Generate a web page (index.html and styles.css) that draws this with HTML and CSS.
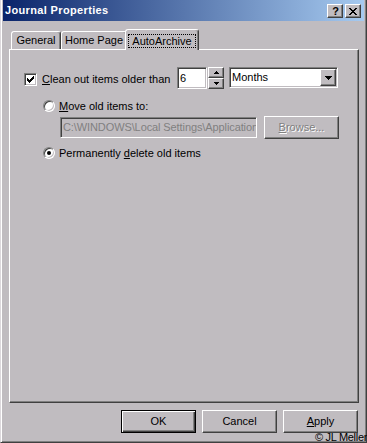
FILE: index.html
```html
<!DOCTYPE html>
<html>
<head>
<meta charset="utf-8">
<link rel="stylesheet" href="styles.css">
</head>
<body>
<div class="window">
  <div class="titlebar">
    <span class="title">Journal Properties</span>
    <div class="tbtns">
      <span class="tbtn help">?</span>
      <span class="tbtn close">
        <svg width="8" height="7" viewBox="0 0 8 7" shape-rendering="crispEdges"><path d="M0 0h2v1H0zM6 0h2v1H6zM1 1h2v1H1zM5 1h2v1H5zM2 2h4v1H2zM3 3h2v1H3zM2 4h4v1H2zM1 5h2v1H1zM5 5h2v1H5zM0 6h2v1H0zM6 6h2v1H6z" fill="#000"/></svg>
      </span>
    </div>
  </div>
  <div class="body">
    <div class="tabs">
      <div class="tab t-general">General</div>
      <div class="tab t-home">Home Page</div>
      <div class="tab active"><span class="focus">AutoArchive</span></div>
    </div>
    <div class="panel">
      <div class="row r1">
        <span class="check sunk">
          <svg width="9" height="9" viewBox="0 0 9 9" shape-rendering="crispEdges"><path d="M1 3h1v3H1zM2 4h1v3H2zM3 5h1v3H3zM4 4h1v3H4zM5 3h1v3H5zM6 2h1v3H6zM7 1h1v3H7z" fill="#000"/></svg>
        </span>
        <span class="lbl l1"><u>C</u>lean out items older than</span>
        <span class="edit sunk">6</span>
        <span class="spin">
          <span class="sb raised"><svg width="5" height="3" viewBox="0 0 5 3" shape-rendering="crispEdges"><path d="M2 0h1v1h1v1h1v1H0V2h1V1h1z" fill="#000"/></svg></span>
          <span class="sb raised"><svg width="5" height="3" viewBox="0 0 5 3" shape-rendering="crispEdges"><path d="M0 0h5v1H4v1H3v1H2V2H1V1H0z" fill="#000"/></svg></span>
        </span>
        <span class="combo sunk">
          <span class="ctext">Months</span>
          <span class="cbtn raised"><svg width="7" height="4" viewBox="0 0 7 4" shape-rendering="crispEdges"><path d="M0 0h7v1H6v1H5v1H4v1H3V3H2V2H1V1H0z" fill="#000"/></svg></span>
        </span>
      </div>
      <div class="row r2">
        <span class="radio"></span>
        <span class="lbl"><u>M</u>ove old items to:</span>
      </div>
      <div class="row r3">
        <span class="path sunk"><span class="ptext">C:\WINDOWS\Local Settings\Application</span></span>
        <span class="browse raised"><u>B</u>rowse...</span>
      </div>
      <div class="row r4">
        <span class="radio on"></span>
        <span class="lbl">Permanently <u>d</u>elete old items</span>
      </div>
    </div>
    <div class="buttons">
      <span class="btn default">OK</span>
      <span class="btn raised">Cancel</span>
      <span class="btn raised"><u>A</u>pply</span>
    </div>
  </div>
  <div class="copy">© JL Meller</div>
</div>
</body>
</html>
```
FILE: styles.css
```css
:root {
  --face: #c0bcc0;
  --shadow: #808080;
  --dark: #404040;
}
* { box-sizing: border-box; }
html, body {
  margin: 0;
  background: var(--face);
  overflow: hidden;
}
body {
  font-family: "Liberation Sans", Arial, sans-serif;
  font-size: 11px;
  color: #000;
}
u { text-decoration: underline; text-underline-offset: 1px; }

.window {
  position: relative;
  width: 367px;
  height: 443px;
  background: var(--face);
  border-left: 1px solid #dcd8dc;
  border-right: 1px solid var(--dark);
  border-bottom: 1px solid var(--dark);
  padding: 0 2px 2px 2px;
  box-shadow: inset 1px 0 #fff, inset -1px -1px var(--shadow);
  display: flex;
  flex-direction: column;
}

.titlebar {
  height: 21px;
  flex: none;
  background: linear-gradient(90deg, #0a246a, #a6caf0);
  display: flex;
  align-items: flex-start;
  padding: 0 3px 0 2px;
}
.title {
  flex: 1;
  color: #fff;
  font-weight: bold;
  line-height: 21px;
  letter-spacing: 0.35px;
}
.tbtns {
  display: flex;
  gap: 2px;
  margin-top: 4px;
}
.tbtn {
  width: 16px;
  height: 14px;
  background: var(--face);
  border: 1px solid;
  border-color: #fff var(--dark) var(--dark) #fff;
  box-shadow: inset -1px -1px var(--shadow);
  display: flex;
  align-items: center;
  justify-content: center;
}
.help {
  font-weight: bold;
  font-size: 11px;
  line-height: 12px;
  padding-left: 1px;
}

.raised {
  background: var(--face);
  border: 1px solid;
  border-color: #fff var(--dark) var(--dark) #fff;
  box-shadow: inset -1px -1px var(--shadow);
}
.sunk {
  background: #fff;
  border: 1px solid;
  border-color: var(--shadow) #fff #fff var(--shadow);
  box-shadow: inset 1px 1px var(--dark), inset -1px -1px var(--face);
}

.body {
  padding: 8px 5px 0 6px;
  display: flex;
  flex-direction: column;
}

.tabs {
  height: 20px;
  display: flex;
  align-items: flex-end;
  padding-left: 2px;
  position: relative;
  z-index: 2;
}
.tab {
  height: 18px;
  border: 1px solid;
  border-bottom: 0;
  border-color: #fff var(--dark) transparent #fff;
  box-shadow: inset -1px 0 var(--shadow);
  border-radius: 3px 3px 0 0;
  text-align: center;
  line-height: 17px;
  background: var(--face);
}
.t-general { width: 50px; }
.t-home { width: 66px; }
.tab.active {
  width: 74px;
  height: 21px;
  margin: 0 0 -1px -2px;
  position: relative;
  z-index: 1;
}
.focus {
  display: block;
  margin: 4px 2px 0 2px;
  height: 14px;
  border: 1px dotted #000;
  line-height: 12px;
}

.panel {
  height: 354px;
  border: 1px solid;
  border-color: #fff var(--dark) var(--dark) #fff;
  box-shadow: inset -1px -1px var(--shadow);
  padding: 17px 0 0 14px;
}

.row {
  display: flex;
  align-items: center;
}
.r1 {
  height: 22px;
  align-items: flex-start;
}
.check {
  width: 13px;
  height: 13px;
  margin-top: 6px;
  margin-right: 5px;
  display: flex;
}
.check svg { margin: 1px; }
.lbl { line-height: 16px; white-space: nowrap; }
.l1 {
  width: 135px;
  padding-top: 6px;
  line-height: 13px;
}
.edit {
  width: 30px;
  height: 22px;
  padding: 1px 2px;
  line-height: 19px;
}
.spin {
  width: 16px;
  height: 22px;
  margin-left: 1px;
  display: flex;
  flex-direction: column;
}
.sb {
  height: 11px;
  display: flex;
  align-items: center;
  justify-content: center;
}
.combo {
  width: 109px;
  height: 21px;
  margin-left: 5px;
  padding: 1px;
  display: flex;
}
.ctext {
  flex: 1;
  padding-left: 1px;
  line-height: 17px;
}
.cbtn {
  width: 16px;
  height: 17px;
  display: flex;
  align-items: center;
  justify-content: center;
}

.r2 {
  height: 16px;
  margin-top: 9px;
  padding-left: 19px;
}
.radio {
  position: relative;
  width: 12px;
  height: 12px;
  border-radius: 50%;
  background: #fff;
  border: 1px solid;
  border-color: var(--shadow) #fff #fff var(--shadow);
  box-shadow: inset 1px 1px var(--dark), inset -1px -1px var(--face);
  margin-right: 4px;
  flex: none;
}
.radio.on::after {
  content: "";
  position: absolute;
  left: 3px;
  top: 3px;
  width: 4px;
  height: 4px;
  border-radius: 50%;
  background: #000;
}

.r3 {
  height: 23px;
  margin-top: 2px;
  padding-left: 36px;
}
.path {
  width: 197px;
  height: 21px;
  padding: 1px 2px;
  line-height: 17px;
  background: var(--face);
  color: #808080;
  white-space: nowrap;
  overflow: hidden;
  display: flex;
}
.ptext {
  letter-spacing: -0.1px;
}
.browse {
  width: 75px;
  height: 23px;
  margin-left: 7px;
  text-align: center;
  line-height: 21px;
  color: #808080;
  text-shadow: 1px 1px #fff;
}

.r4 {
  height: 16px;
  margin-top: 6px;
  padding-left: 19px;
}

.buttons {
  display: flex;
  justify-content: flex-end;
  gap: 6px;
  margin-top: 7px;
  padding-right: 1px;
}
.btn {
  width: 75px;
  height: 23px;
  text-align: center;
  line-height: 21px;
}
.btn.default {
  background: var(--face);
  border: 1px solid #000;
  box-shadow: inset 1px 1px #fff, inset -1px -1px var(--dark), inset -2px -2px var(--shadow);
}

.copy {
  position: absolute;
  left: 314px;
  top: 432px;
  font-size: 11px;
  line-height: 11px;
  letter-spacing: -0.3px;
  white-space: nowrap;
  z-index: 3;
}
```
